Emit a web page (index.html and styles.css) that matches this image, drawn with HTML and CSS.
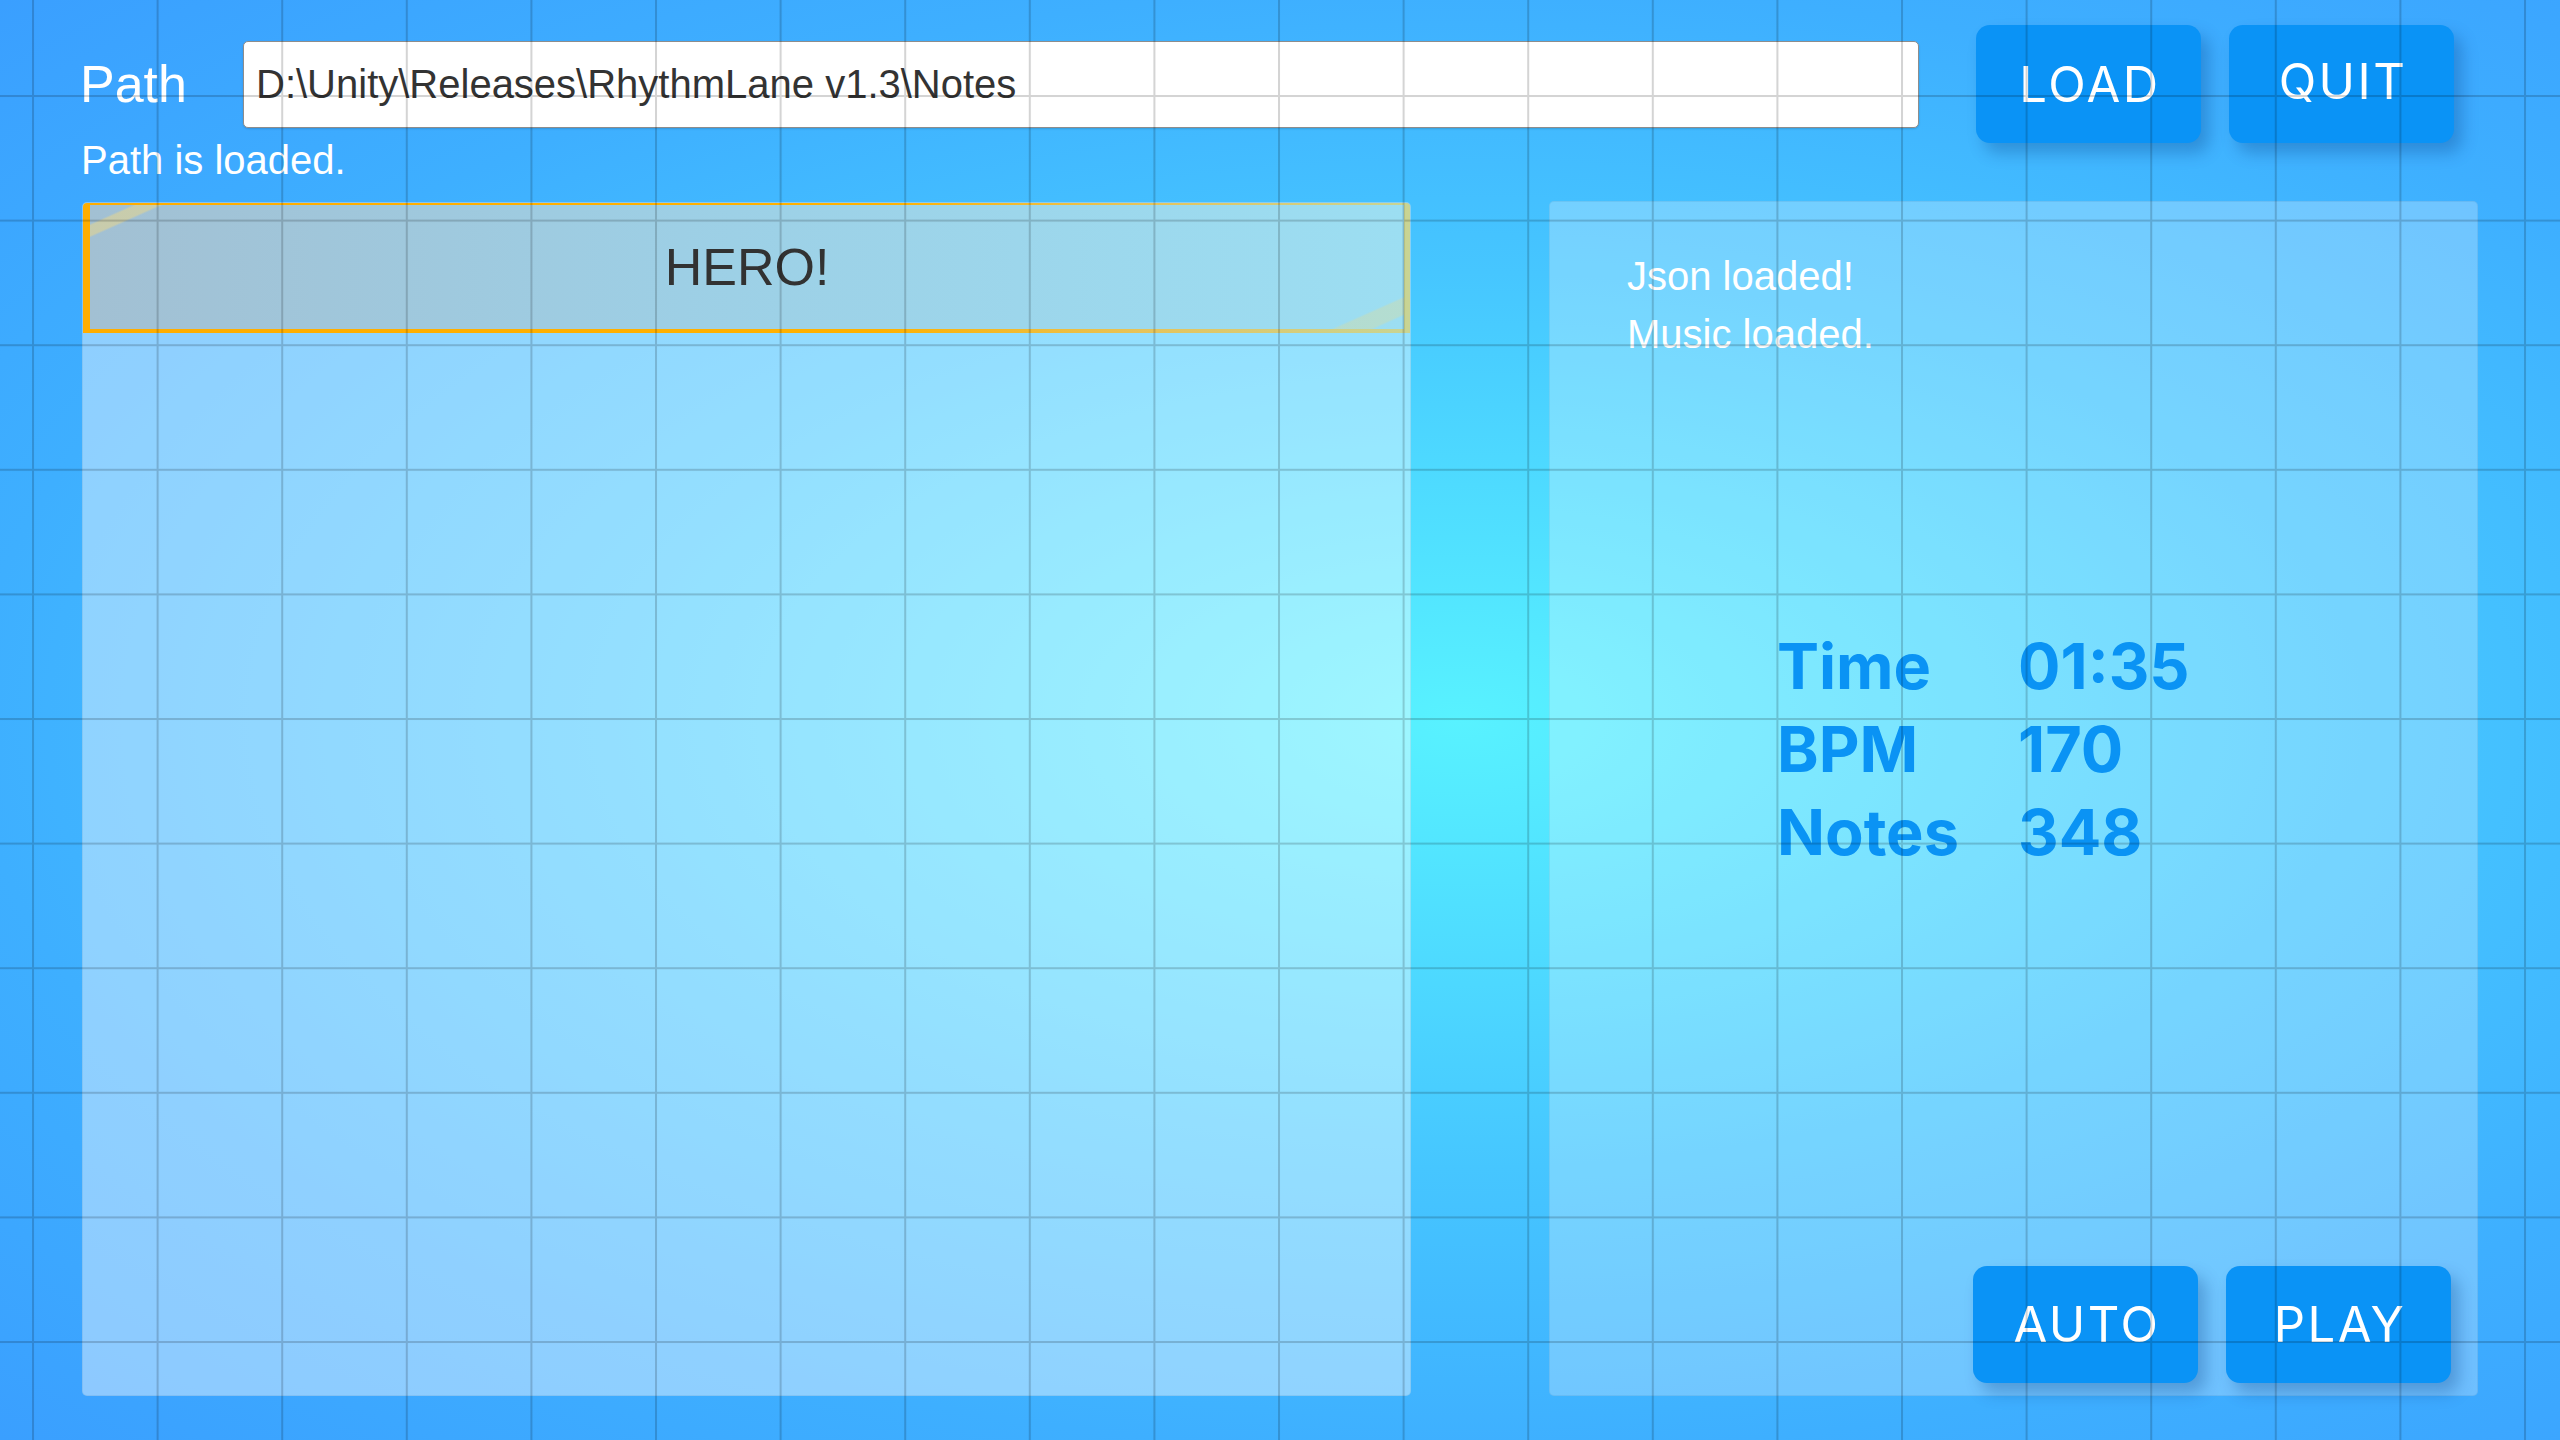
FILE: index.html
```html
<!DOCTYPE html>
<html lang="en">
<head>
<meta charset="utf-8">
<title>RhythmLane</title>
<link rel="stylesheet" href="styles.css">
</head>
<body>
<main class="screen">
  <header class="top">
    <div class="path-row">
      <label class="path-label" for="path-input">Path</label>
      <div class="path-field" id="path-input">D:\Unity\Releases\RhythmLane v1.3\Notes</div>
      <div class="actions top-actions">
        <button class="btn">LOAD</button>
        <button class="btn btn-quit">QUIT</button>
      </div>
    </div>
    <p class="path-status">Path is loaded.</p>
  </header>

  <section class="panels">
    <div class="panel song-list">
      <div class="song-item selected">HERO!</div>
    </div>

    <div class="panel song-info">
      <div class="log">
        <p>Json loaded!</p>
        <p>Music loaded.</p>
      </div>
      <dl class="stats">
        <dt>Time</dt><dd>01:35</dd>
        <dt>BPM</dt><dd>170</dd>
        <dt>Notes</dt><dd>348</dd>
      </dl>
      <div class="actions play-actions">
        <button class="btn">AUTO</button>
        <button class="btn">PLAY</button>
      </div>
    </div>
  </section>
</main>

<!-- blueprint grid drawn over the whole screen -->
<svg class="grid-overlay" width="2560" height="1440" aria-hidden="true">
  <defs>
    <pattern id="cell" x="32" y="95" width="124.6" height="124.6" patternUnits="userSpaceOnUse">
      <rect x="0" y="0" width="2" height="124.6" fill="rgba(0,0,0,0.17)"/>
      <rect x="2" y="0" width="122.6" height="2" fill="rgba(0,0,0,0.17)"/>
    </pattern>
  </defs>
  <rect width="2560" height="1440" fill="url(#cell)"/>
</svg>
</body>
</html>
```

FILE: styles.css
```css
html, body {
  margin: 0;
  padding: 0;
  width: 2560px;
  height: 1440px;
  overflow: hidden;
}

body {
  background: radial-gradient(ellipse farthest-corner at 57% 50%,
      #58f2ff 0%,
      #50e0ff 18%,
      #46c6ff 44%,
      #3eafff 72%,
      #3a9fff 100%);
  font-family: "Liberation Sans", Arial, sans-serif;
  color: #fff;
}

.screen {
  box-sizing: border-box;
  width: 2560px;
  height: 1440px;
  padding: 25px 0 0 80px;
  display: flex;
  flex-direction: column;
}

/* ---------- top bar ---------- */
.path-row {
  display: flex;
  align-items: center;
  height: 118px;
}

.path-label {
  flex: none;
  width: 163px;
  font-size: 52px;
  line-height: 52px;
  color: #fff;
}

.path-field {
  flex: none;
  box-sizing: border-box;
  width: 1676px;
  height: 87px;
  margin-top: 1px;
  padding: 0 12px;
  display: flex;
  align-items: center;
  background: #fff;
  border: 1px solid #8d8d8d;
  border-radius: 5px;
  box-shadow: 0 1px 2px rgba(0, 0, 0, 0.15);
  font-size: 40px;
  color: #333;
  white-space: nowrap;
}

.actions {
  display: flex;
  gap: 28px;
}

.top-actions {
  margin-left: 57px;
}

.btn {
  box-sizing: border-box;
  width: 225px;
  height: 118px;
  padding: 0 0 0 3px;
  border: none;
  border-radius: 14px;
  background: #0a93f6;
  box-shadow: 8px 10px 16px rgba(0, 50, 120, 0.28);
  color: #fff;
  font-family: Inter, "Noto Sans", sans-serif;
  font-size: 49px;
  font-weight: 400;
  letter-spacing: 2.5px;
}

.btn-quit {
  padding-bottom: 5px;
}

.path-status {
  margin: -3px 0 0 1px;
  font-size: 40px;
  line-height: 40px;
}

/* ---------- panels ---------- */
.panels {
  display: flex;
  gap: 138px;
  margin: 22px 0 0 2px;
  height: 1194px;
}

.panel {
  box-sizing: border-box;
  height: 100%;
  border-radius: 5px;
  border: 1px solid rgba(0, 60, 120, 0.08);
}

.song-list {
  width: 1329px;
  background: rgba(255, 255, 255, 0.42);
  overflow: hidden;
}

.song-item {
  box-sizing: border-box;
  height: 130px;
  display: flex;
  align-items: center;
  justify-content: center;
  font-size: 52px;
  color: #323232;
  border-style: solid;
  border-width: 2px 6px 4px 7px;
  border-image: linear-gradient(to right,
      #ffad00 0%, #ffb100 60%, #e6c35a 80%, #c9d493 100%) 1;
  background:
    linear-gradient(156deg,
      transparent 17px, rgba(232, 214, 140, 0.55) 19px,
      rgba(232, 214, 140, 0.55) 28px, transparent 30px) left top / 110px 40px no-repeat,
    linear-gradient(336deg,
      transparent 12px, rgba(215, 220, 160, 0.4) 14px,
      rgba(215, 220, 160, 0.4) 28px, transparent 30px) right bottom / 110px 40px no-repeat,
    linear-gradient(to right, #a2c0d3 0%, #9dcfe5 45%, #9cdef2 100%);
}

.song-info {
  width: 929px;
  background: rgba(255, 255, 255, 0.26);
  margin-top: -1px;
  height: calc(100% + 1px);
  display: flex;
  flex-direction: column;
  padding: 45px 26px 12px 77px;
}

.log p {
  margin: 0;
  font-size: 40px;
  line-height: 58px;
  color: #fff;
}

.stats {
  display: grid;
  grid-template-columns: 241px auto;
  margin: 262px 0 0 150px;
  font-family: Inter, "Noto Sans", sans-serif;
  font-weight: 700;
  font-size: 63px;
  line-height: 83px;
  color: #0a93f4;
}

.stats dt,
.stats dd {
  margin: 0;
}

.play-actions {
  margin-top: auto;
  justify-content: flex-end;
}

.play-actions .btn {
  height: 117px;
}

/* ---------- grid overlay ---------- */
.grid-overlay {
  position: fixed;
  left: 0;
  top: 0;
  pointer-events: none;
}
```
